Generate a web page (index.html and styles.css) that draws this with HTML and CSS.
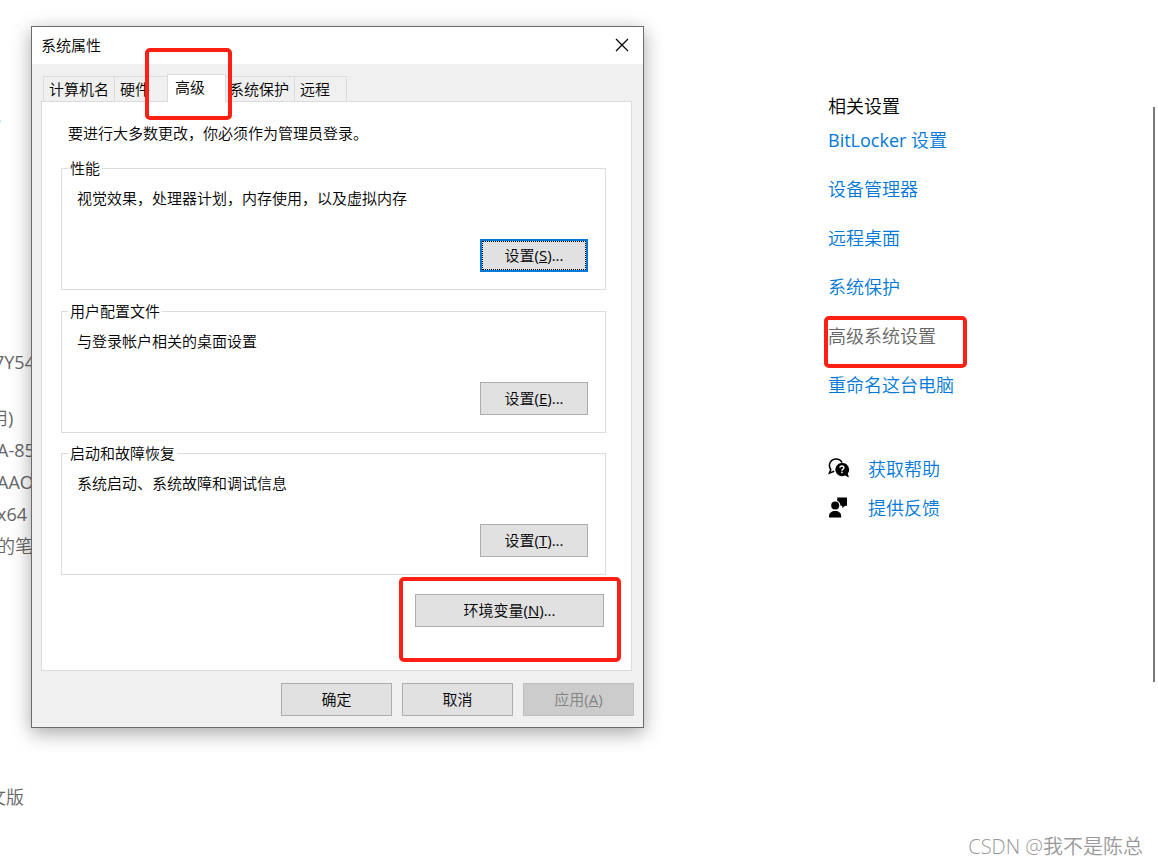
FILE: index.html
```html
<!DOCTYPE html>
<html lang="zh-CN">
<head>
  <meta charset="UTF-8">
  <meta name="viewport" content="width=device-width, initial-scale=1.0">
  <title>系统属性</title>
  <link rel="stylesheet" href="styles.css">
</head>
<body>

<div class="page">
  <main class="specs">
    <p class="note">,</p>
    <ul class="spec-list">
      <li class="first">7Y54</li>
      <li class="cut">用)</li>
      <li>A-85</li>
      <li>AAO</li>
      <li>x64</li>
      <li>的笔</li>
    </ul>
    <p class="edition">文版</p>
  </main>

  <aside class="related">
    <h2>相关设置</h2>
    <nav class="links">
      <a href="#">BitLocker 设置</a>
      <a href="#">设备管理器</a>
      <a href="#">远程桌面</a>
      <a href="#">系统保护</a>
      <a href="#" class="current">高级系统设置<span class="mark mark-link"></span></a>
      <a href="#">重命名这台电脑</a>
    </nav>
    <div class="help">
      <a href="#">
        <svg class="icon" viewBox="0 0 22 22" aria-hidden="true">
          <path d="M6.200 14.300L1.300 16.200l1.500-3.700C-.6 7.500 3 2 8 2c2.800 0 5 1.400 6 3.600" fill="none" stroke="#000" stroke-width="1.500"/>
          <path d="M14 6a6.600 6.600 0 1 0 2.900 12.500l4.100 2-1.200-4A6.600 6.600 0 0 0 14 6z"/>
          <path d="M12 10.700c0-2.400 3.900-2.300 3.900 0 0 1.400-2 1.400-2 3" fill="none" stroke="#fff" stroke-width="1.400"/>
          <rect x="13.200" y="14.600" width="1.500" height="1.500" fill="#fff"/>
        </svg>
        获取帮助
      </a>
      <a href="#">
        <svg class="icon" viewBox="0 0 22 22" aria-hidden="true">
          <circle cx="7.200" cy="9.500" r="4"/>
          <path d="M1 21.500v-1.500c0-3 2.600-5 6.200-5s6 2 6 5v1.500z"/>
          <path d="M9.200 1.500H19v8.200h-1.800L14.200 12V9.700h-1.700c-.1-2.600-1.400-4.300-3.300-5z"/>
        </svg>
        提供反馈
      </a>
    </div>
  </aside>
  <div class="scroll-thumb"></div>
</div>

<div class="dialog" role="dialog" aria-labelledby="dialogTitle">
  <div class="title-bar">
    <span id="dialogTitle">系统属性</span>
    <button type="button" class="close-btn" aria-label="关闭">
      <svg viewBox="0 0 14 14" aria-hidden="true"><path d="M1 1l12 12M13 1L1 13" stroke="#000" stroke-width="1.200"/></svg>
    </button>
  </div>

  <div class="tabs" role="tablist">
    <button type="button" class="tab" role="tab">计算机名</button>
    <button type="button" class="tab" role="tab">硬件</button>
    <button type="button" class="tab active" role="tab" aria-selected="true">高级<span class="mark mark-tab"></span></button>
    <button type="button" class="tab" role="tab">系统保护</button>
    <button type="button" class="tab" role="tab">远程</button>
  </div>

  <div class="panel" role="tabpanel">
    <p class="intro">要进行大多数更改，你必须作为管理员登录。</p>

    <fieldset class="group">
      <legend>性能</legend>
      <p>视觉效果，处理器计划，内存使用，以及虚拟内存</p>
      <button type="button" class="btn focused">设置(<u>S</u>)...</button>
    </fieldset>

    <fieldset class="group">
      <legend>用户配置文件</legend>
      <p>与登录帐户相关的桌面设置</p>
      <button type="button" class="btn">设置(<u>E</u>)...</button>
    </fieldset>

    <fieldset class="group">
      <legend>启动和故障恢复</legend>
      <p>系统启动、系统故障和调试信息</p>
      <button type="button" class="btn">设置(<u>T</u>)...</button>
    </fieldset>

    <button type="button" class="btn btn-env">环境变量(<u>N</u>)...<span class="mark mark-env"></span></button>
  </div>

  <div class="actions">
    <button type="button" class="btn">确定</button>
    <button type="button" class="btn">取消</button>
    <button type="button" class="btn" disabled>应用(<u>A</u>)</button>
  </div>
</div>

<div class="watermark">CSDN @我不是陈总</div>

</body>
</html>
```
FILE: styles.css
```css
* {
  box-sizing: border-box;
}

body {
  margin: 0;
  background: #fff;
  color: #000;
  font-family: "Open Sans", "Noto Sans CJK SC DemiLight", "Noto Sans CJK SC", sans-serif;
  font-size: 15px;
  line-height: 20px;
}

p, h2, ul {
  margin: 0;
  padding: 0;
}

button {
  font: inherit;
  color: inherit;
}

/* settings page */
.page {
  display: flex;
  min-height: 100vh;
  overflow: hidden;
  font-size: 18px;
  line-height: 24px;
}

.specs {
  flex: 1;
  min-width: 0;
  padding-top: 104px;
  color: #666;
  line-height: 32px;
  text-indent: -3px;
}

.note {
  line-height: 24px;
}

.spec-list {
  list-style: none;
  margin-top: 218px;
}

.spec-list .first {
  margin-bottom: 24px;
  text-indent: -6px;
}

.spec-list .cut {
  text-indent: -10px;
}

.edition {
  margin-top: 219px;
  text-indent: -12px;
}

.related {
  width: 325px;
  padding-top: 94px;
}

.related h2 {
  font-size: 18px;
  font-weight: 400;
  margin-bottom: 10px;
}

.related a {
  color: #0078d7;
  text-decoration: none;
}

.links {
  display: flex;
  flex-direction: column;
  align-items: flex-start;
  gap: 25px;
}

.links .current {
  position: relative;
  color: #666;
}

.help {
  display: flex;
  flex-direction: column;
  gap: 15px;
  margin-top: 60px;
}

.help a {
  display: flex;
  align-items: center;
  gap: 18px;
}

.icon {
  width: 22px;
  height: 22px;
  margin-bottom: 2px;
}

.scroll-thumb {
  width: 2px;
  margin: 107px 3px 185px 0;
  background: #7a7a7a;
}

/* dialog */
.dialog {
  position: absolute;
  left: 31px;
  top: 26px;
  width: 613px;
  border: 1px solid #6b6b6b;
  background: #f0f0f0;
  box-shadow: 0 5px 18px rgba(0, 0, 0, 0.35);
}

.title-bar {
  display: flex;
  align-items: center;
  justify-content: space-between;
  height: 37px;
  padding: 0 14px 2px 9px;
  background: #fff;
}

.close-btn {
  display: flex;
  padding: 0;
  border: 0;
  background: none;
}

.close-btn svg {
  width: 14px;
  height: 14px;
}

.tabs {
  display: flex;
  align-items: flex-end;
  height: 37px;
  padding-left: 11px;
}

.tab {
  min-width: 53px;
  height: 25px;
  padding: 0 5px;
  border: 1px solid #dcdcdc;
  border-width: 1px 0 0 1px;
  background: #f0f0f0;
  text-align: left;
  white-space: nowrap;
}

.tab:last-child {
  border-right-width: 1px;
}

.tab.active {
  position: relative;
  width: 59px;
  height: 28px;
  margin: 0 -3px -1px 0;
  padding: 0 0 4px 7px;
  border-right-width: 1px;
  background: #fff;
}

.panel {
  display: flex;
  flex-direction: column;
  margin: 0 11px 0 9px;
  padding: 21px 25px 43px 19px;
  border: 1px solid #dcdcdc;
  background: #fff;
}

.intro {
  margin: 0 0 15px 7px;
}

.group {
  display: flex;
  flex-direction: column;
  min-width: 0;
  margin: 0 0 11px;
  padding: 10px 17px 17px 15px;
  border: 1px solid #dcdcdc;
}

.group:nth-of-type(2) {
  margin-bottom: 10px;
}

.group legend {
  margin-left: -9px;
  padding: 0 2px;
}

.btn {
  width: 108px;
  height: 33px;
  padding: 0 0 2px;
  border: 1px solid #adadad;
  background: #e1e1e1;
}

.group .btn {
  align-self: flex-end;
  margin-top: 31px;
}

.btn.focused {
  border: 2px solid #0078d7;
  outline: 1px dotted #000;
  outline-offset: -3px;
}

.btn:disabled {
  border-color: #bfbfbf;
  background: #ccc;
  color: #838383;
}

.btn-env {
  position: relative;
  align-self: flex-end;
  width: 189px;
  margin: 8px 2px 0 0;
}

.actions {
  display: flex;
  justify-content: flex-end;
  gap: 10px;
  padding: 12px 9px 11px;
}

.actions .btn {
  width: 111px;
}

/* red frames drawn over the controls */
.mark {
  position: absolute;
  border: 4px solid #ff2015;
  border-radius: 5px;
  pointer-events: none;
}

.mark-tab {
  inset: -27px -7px -18px -23px;
}

.mark-env {
  inset: -18px -18px -36px -17px;
}

.mark-link {
  inset: -8px -31px -20px -4px;
}

.watermark {
  position: absolute;
  right: 15px;
  bottom: 8px;
  color: #999;
  font-size: 20px;
  font-weight: 300;
  line-height: 24px;
}
```
